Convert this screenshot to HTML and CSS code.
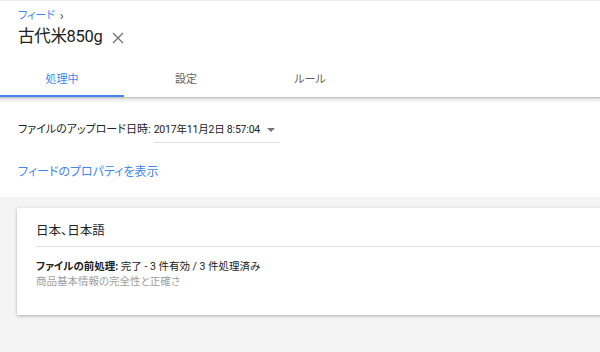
FILE: index.html
```html
<!DOCTYPE html>
<html lang="ja">
<head>
<meta charset="utf-8">
<link rel="stylesheet" href="styles.css">
</head>
<body>
<header class="header">
  <div class="crumbs"><a class="crumb-link">フィード</a><span class="chev">›</span></div>
  <div class="title-row">
    <h1 class="title">古代米850g</h1>
    <svg class="close" width="12" height="12" viewBox="0 0 12 12"><path d="M1 1L11 11M11 1L1 11" stroke="#757575" stroke-width="1.4" fill="none"/></svg>
  </div>
  <nav class="tabs">
    <div class="tab active">処理中</div>
    <div class="tab">設定</div>
    <div class="tab">ルール</div>
  </nav>
</header>
<section class="upload">
  <div class="upload-row">
    <span class="label">ファイルのアップロード日時:</span>
    <div class="select">
      <span class="value">2017年11月2日 8:57:04</span>
      <svg class="arrow" width="8" height="4" viewBox="0 0 8 4"><path d="M0 0H8L4 4Z" fill="#757575"/></svg>
    </div>
  </div>
  <a class="props-link">フィードのプロパティを表示</a>
</section>
<section class="card">
  <div class="card-title">日本、日本語</div>
  <div class="card-body">
    <div class="status"><b>ファイルの前処理:</b> 完了 - 3 件有効 / 3 件処理済み</div>
    <div class="sub">商品基本情報の完全性と正確さ</div>
  </div>
</section>
</body>
</html>
```
FILE: styles.css
```css
* { box-sizing: border-box; }
html, body { margin: 0; padding: 0; }
body {
  width: 600px;
  height: 352px;
  overflow: hidden;
  background: #f4f4f4;
  font-family: Roboto, "Noto Sans CJK JP", sans-serif;
  font-feature-settings: "palt";
  color: #212121;
}
.header {
  background: #fff;
  border-top: 1px solid #ededed;
  border-bottom: 1px solid #c4c4c4;
  box-shadow: 0 1px 2px rgba(0,0,0,0.12);
  padding-top: 7px;
}
.crumbs {
  padding-left: 18px;
  font-size: 11px;
  line-height: 16px;
  display: flex;
  align-items: center;
  gap: 5px;
}
.crumb-link { color: #4285f4; }
.chev { color: #424242; font-size: 12px; }
.title-row {
  padding-left: 18px;
  display: flex;
  align-items: center;
  gap: 9px;
  height: 26px;
}
.title {
  margin: 0;
  font-size: 16.5px;
  font-weight: 400;
  line-height: 26px;
  letter-spacing: -0.3px;
  color: #212121;
}
.close { display: block; margin-top: 1px; }
.tabs {
  display: flex;
  margin-top: 9px;
}
.tab {
  width: 124px;
  height: 38px;
  display: flex;
  align-items: center;
  justify-content: center;
  font-size: 11px;
  color: #616161;
  border-bottom: 2px solid transparent;
  padding-top: 2px;
}
.tab.active {
  color: #4285f4;
  border-bottom-color: #4285f4;
}
.upload {
  background: #fff;
  margin-top: 4px;
  padding: 18px 18px 16px;
}
.upload-row {
  display: flex;
  align-items: flex-start;
  gap: 3px;
  font-size: 11px;
}
.label { line-height: 20px; color: #212121; white-space: nowrap; }
.select {
  display: flex;
  align-items: center;
  height: 23px;
  padding: 0 5px 3px 0;
  border-bottom: 1px solid #e0e0e0;
  gap: 7px;
  white-space: nowrap;
}
.value { line-height: 20px; color: #212121; font-size: 10.5px; letter-spacing: -0.2px; }
.arrow { display: block; flex-shrink: 0; }
.props-link {
  display: block;
  margin-top: 20px;
  font-size: 12px;
  line-height: 18px;
  color: #4285f4;
}
.card {
  background: #fff;
  margin: 11px -10px 0 17px;
  padding: 13px 0 25px 19px;
  box-shadow: 0 1px 3px rgba(0,0,0,0.3);
  height: 107px;
}
.card-title {
  font-size: 12.5px;
  line-height: 20px;
  padding-bottom: 5px;
  border-bottom: 1px solid #e0e0e0;
}
.card-body {
  padding-top: 12px;
  font-size: 10.5px;
  line-height: 15px;
}
.status b { font-weight: 700; }
.sub { color: #9e9e9e; }
```
